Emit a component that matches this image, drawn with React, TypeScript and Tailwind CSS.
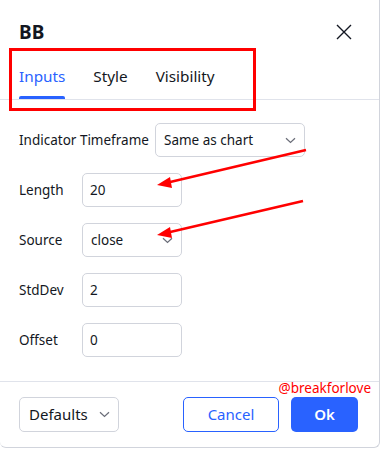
import React from "react";

const Chevron = () => (
  <svg width="11" height="7" viewBox="0 0 11 7" fill="none" className="shrink-0">
    <path d="M1 1.2 L5.5 5.5 L10 1.2" stroke="#6a6d78" strokeWidth="1.2" />
  </svg>
);

const TextInput = ({ value }: { value: string }) => (
  <div className="flex h-[34px] w-[100px] items-center rounded-[5px] border border-[#d1d4dc] px-[7px] text-[13.5px] text-[#131722]">
    {value}
  </div>
);

export default function App() {
  const rows = [
    { label: "Length", value: "20", select: false },
    { label: "Source", value: "close", select: true },
    { label: "StdDev", value: "2", select: false },
    { label: "Offset", value: "0", select: false },
  ];
  return (
    <div
      className="relative h-[449px] w-[381px] overflow-hidden bg-white"
      style={{ fontFamily: '"Noto Sans", "Open Sans", sans-serif' }}
    >
      <div className="flex h-[448px] w-[380px] flex-col rounded-b-[6px] border-b border-r border-[#d1d4dc] bg-white">
        {/* Header */}
        <div className="flex h-[56px] items-start justify-between pl-[19px] pr-[27px] pt-[19px]">
          <div className="text-[19px] font-bold leading-[26px] text-[#131722]">BB</div>
          <svg width="16" height="16" viewBox="0 0 16 16" className="mt-[5px]">
            <path d="M1 1 L15 15 M15 1 L1 15" stroke="#131722" strokeWidth="1.4" />
          </svg>
        </div>
        {/* Tabs */}
        <div className="flex h-[44px] items-start gap-[28px] border-b border-[#e0e3eb] pl-[19px]">
          <div className="flex h-[43px] flex-col justify-between">
            <span className="pt-[10px] text-[15.3px] leading-[20px] text-[#2962ff]">Inputs</span>
            <span className="h-[3px] w-full rounded-t-[2px] bg-[#2962ff]" />
          </div>
          <span className="pt-[10px] text-[15.3px] leading-[20px] text-[#131722]">Style</span>
          <span className="pt-[10px] text-[15.3px] leading-[20px] text-[#131722]">Visibility</span>
        </div>
        {/* Form */}
        <div className="flex flex-col gap-[16px] pl-[19px] pt-[23px]">
          <div className="flex items-center">
            <span className="w-[136px] text-[13.5px] text-[#131722]">Indicator Timeframe</span>
            <div className="flex h-[34px] w-[150px] items-center justify-between rounded-[5px] border border-[#d1d4dc] pl-[8px] pr-[8px] text-[13.5px] text-[#131722]">
              <span>Same as chart</span>
              <Chevron />
            </div>
          </div>
          {rows.map((r) => (
            <div key={r.label} className="flex items-center">
              <span className="w-[63px] text-[13.5px] text-[#131722]">{r.label}</span>
              {r.select ? (
                <div className="flex h-[34px] w-[100px] items-center justify-between rounded-[5px] border border-[#d1d4dc] pl-[8px] pr-[8px] text-[13.5px] text-[#131722]">
                  <span>{r.value}</span>
                  <Chevron />
                </div>
              ) : (
                <TextInput value={r.value} />
              )}
            </div>
          ))}
        </div>
        <div className="flex-1" />
        {/* Footer */}
        <div className="flex h-[66px] items-start justify-between border-t border-[#e0e3eb] pl-[19px] pr-[21px] pt-[15px]">
          <div className="flex h-[35px] w-[100px] items-center justify-between rounded-[5px] border border-[#d1d4dc] pl-[9px] pr-[8px] text-[15px] text-[#131722]">
            <span>Defaults</span>
            <Chevron />
          </div>
          <div className="flex gap-[12px]">
            <div className="flex h-[35px] w-[96px] items-center justify-center rounded-[5px] border border-[#2962ff] text-[15px] text-[#2962ff]">
              Cancel
            </div>
            <div className="flex h-[35px] w-[67px] items-center justify-center rounded-[5px] bg-[#2962ff] text-[15px] font-semibold text-white">
              Ok
            </div>
          </div>
        </div>
      </div>

      {/* watermark */}
      <div className="absolute right-[10px] top-[380px] text-[13.5px] leading-[16px] text-[#ff0000]">@breakforlove</div>

      {/* red annotation box */}
      <div className="absolute left-[9px] top-[48px] h-[63px] w-[247px] border-[3px] border-[#ff0000]" />

      {/* arrows */}
      <svg className="absolute left-0 top-0" width="381" height="449" viewBox="0 0 381 449">
        <line x1="306" y1="150" x2="168" y2="182.5" stroke="#ff0000" strokeWidth="2.5" />
        <polygon points="157,185 170,177 172,188" fill="#ff0000" />
        <line x1="303" y1="201" x2="168" y2="232.5" stroke="#ff0000" strokeWidth="2.5" />
        <polygon points="157,235 170,227 172,238" fill="#ff0000" />
      </svg>
    </div>
  );
}
